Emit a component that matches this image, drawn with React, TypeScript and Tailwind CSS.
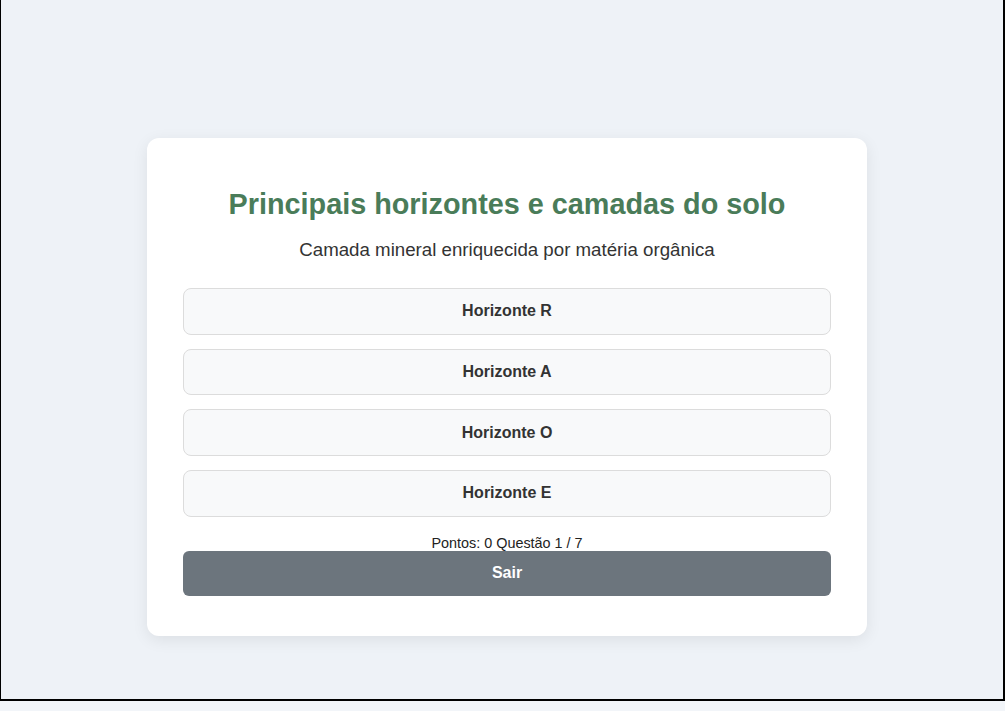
const options = ['Horizonte R', 'Horizonte A', 'Horizonte O', 'Horizonte E'];

export default function App() {
  return (
    <div className="min-h-screen bg-[#f2f5f9]" style={{ fontFamily: '"Liberation Sans", Arial, sans-serif' }}>
      <div className="h-[701px] w-[1005px] border-l border-r-2 border-b-2 border-black bg-[#eef2f7] pt-[138px] pl-[10px] flex justify-center items-start">
        {/* cartão do quiz */}
        <div className="w-[720px] rounded-xl bg-white px-[36px] pt-[50px] pb-[40px] shadow-[0_4px_16px_rgba(0,0,0,0.08)] flex flex-col items-stretch">
          <h2 className="text-center text-[28.8px] leading-[32px] font-bold text-[#4a7c59]">
            Principais horizontes e camadas do solo
          </h2>
          <p className="mt-[19px] text-center text-[18.7px] leading-[22px] text-[#333]">
            Camada mineral enriquecida por matéria orgânica
          </p>

          <div className="mt-[27px] flex flex-col gap-[14px]">
            {options.map((opt) => (
              <button
                key={opt}
                className="h-[46.7px] w-full rounded-lg border border-[#dcdcdc] bg-[#f8f9fa] text-[16px] font-bold text-[#333]"
              >
                {opt}
              </button>
            ))}
          </div>

          <p className="mt-[18px] text-center text-[14.4px] leading-[16px] text-[#222]">Pontos: 0 Questão 1 / 7</p>
          <button className="h-[45px] w-full rounded-md bg-[#6c757d] text-[16px] font-bold text-white">Sair</button>
        </div>
      </div>
    </div>
  );
}
